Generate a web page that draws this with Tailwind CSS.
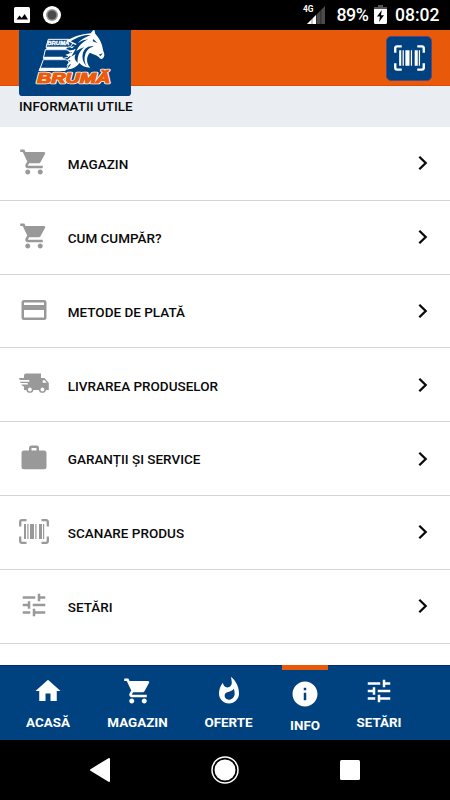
<!DOCTYPE html>
<html lang="ro">
<head>
<meta charset="utf-8">
<title>Informatii utile</title>
<script src="https://cdn.jsdelivr.net/npm/@tailwindcss/browser@4"></script>
</head>
<body class="bg-white">
<svg class="hidden">
  <symbol id="cart" viewBox="0 0 24 24"><path d="M7 18c-1.1 0-1.99.9-1.99 2S5.9 22 7 22s2-.9 2-2-.9-2-2-2zM1 2v2h2l3.6 7.59-1.35 2.45c-.16.28-.25.61-.25.96 0 1.1.9 2 2 2h12v-2H7.42c-.14 0-.25-.11-.25-.25l.03-.12.9-1.63h7.45c.75 0 1.41-.41 1.75-1.03l3.58-6.49A1.003 1.003 0 0020 4H5.21l-.94-2H1zm16 16c-1.1 0-1.99.9-1.99 2s.89 2 1.99 2 2-.9 2-2-.9-2-2-2z"/></symbol>
  <symbol id="card" viewBox="0 0 24 24"><path fill-rule="evenodd" d="M4 4h16a2 2 0 0 1 2 2v12a2 2 0 0 1-2 2H4a2 2 0 0 1-2-2V6a2 2 0 0 1 2-2zM4 6v2h16V6zM4 12v6h16v-6z"/></symbol>
  <symbol id="bag" viewBox="0 0 24 24"><path d="M10 2h4a2 2 0 0 1 2 2v2h4a2 2 0 0 1 2 2v11a2 2 0 0 1-2 2H4a2 2 0 0 1-2-2V8a2 2 0 0 1 2-2h4V4a2 2 0 0 1 2-2m4 4V4h-4v2h4z"/></symbol>
  <symbol id="tune" viewBox="0 0 24 24"><path d="M3 17v2h6v-2H3zM3 5v2h10V5H3zm10 16v-2h8v-2h-8v-2h-2v6h2zM7 9v2H3v2h4v2h2V9H7zm14 4v-2H11v2h10zm-6-4h2V7h4V5h-4V3h-2v6z"/></symbol>
  <symbol id="truck" viewBox="0 0 30 22"><path d="M5 3.200V2.500Q5 .5 7 .5H22V5h3.500L29.800 10v7H27a3.700 3.700 0 0 1-7.200 0H14.500a3.700 3.700 0 0 1-7.200 0H5V13.500L3 12.700 2.400 11.500H9L8.500 10H1.600L1 8.700H10.500L10 7H.7L0 5H5z"/><path d="M23.700 7.200h2l2 2.600h-4z" fill="#fff"/><circle cx="10.900" cy="16.500" r="1.900" fill="#fff"/><circle cx="23.400" cy="16.500" r="1.900" fill="#fff"/></symbol>
  <symbol id="scan" viewBox="0 0 30 25"><path d="M1.200 7.500V3q0-1.800 1.800-1.800h4.500M22.500 1.200H27q1.800 0 1.800 1.800v4.500M28.800 17.500v4.500q0 1.800-1.800 1.800h-4.500M7.500 23.800H3q-1.800 0-1.800-1.800v-4.500" fill="none" stroke="currentColor" stroke-width="2.300"/><path d="M5 5h2v15H5zM8.300 5h1.200v15H8.300zM11 5h4v15h-4zM16.300 5h1.200v15h-1.200zM20 5h3v15h-3zM24 5h1.200v15H24z"/></symbol>
  <symbol id="chev" viewBox="0 0 10 16"><path d="M1.300 1.700L7.700 8l-6.400 6.300" fill="none" stroke="#0a0a0a" stroke-width="2.300"/></symbol>
</svg>
<div class="flex h-[800px] w-[450px] flex-col overflow-hidden bg-white font-['Roboto',sans-serif]">
  <div class="flex h-[30px] shrink-0 items-center bg-black text-white">
    <svg class="ml-[14px] h-4 w-4" viewBox="0 0 16 16"><rect width="16" height="16" rx="1.500" fill="#fff"/><path d="M2.500 12.500l3-4 2.200 2.500 3-4 3.300 5.500z" fill="#000"/></svg>
    <svg class="ml-[13px] h-[18px] w-[18px]" viewBox="0 0 18 18"><circle cx="9" cy="9" r="9" fill="#fff"/><circle cx="9" cy="9" r="6" fill="#999"/><circle cx="9" cy="9" r="4.500" fill="#4a4a4a"/></svg>
    <svg class="ml-[242px] h-6 w-[24px]" viewBox="0 0 24 24"><text x="0" y="9" font-size="9" font-weight="700" fill="#fff" textLength="10.500" lengthAdjust="spacingAndGlyphs">4G</text><path d="M4 21L22 3v18z" fill="#4a4a4a"/><path d="M4 21l9-9v9z" fill="#fff"/><path d="M9 14v7M13.500 9v12M17.800 5v16" stroke="#000" stroke-width=".7" opacity=".6"/></svg>
    <span class="ml-[9.500px] w-[33px] text-[17.8px] font-medium tracking-[-0.5px]">89%</span>
    <svg class="-mt-[2px] ml-[4.500px] h-[19px] w-[13px]" viewBox="0 0 13 19"><path d="M4 0h5v2h4v3H0V2h4z" fill="#555"/><path d="M0 4h13v13.500a1.500 1.500 0 0 1-1.500 1.500h-10A1.500 1.500 0 0 1 0 17.500z" fill="#fff"/><path d="M7.800 5L3 11.500h3L5 17l5-6.800H7z" fill="#000"/></svg>
    <span class="ml-[8px] text-[17.500px] font-medium">08:02</span>
  </div>
  <header class="flex h-[56px] shrink-0 items-start justify-between border-b border-[#dc4c00] bg-[#e85a0a] pr-[18px] pl-[19px]">
    <svg class="relative z-10 h-[66px] w-[112px] shrink-0" viewBox="3 6 336 198">
      <path d="M3 6h336v188q0 10-10 10H13q-10 0-10-10z" fill="#00417f"/>
      <g fill="none" stroke="#fff" stroke-width="3">
        <path d="M91 34h62q14 1 10 14-3 10-15 10H84z"/>
        <path d="M82 65h62q16 1 12 14-4 12-18 12H76z"/>
        <path d="M76 95h66q14 1 10 14l-7 16H65z"/>
      </g>
      <g fill="#fff">
        <path d="M88 56h60l-3 7H84zM79 86h56l-2 7H76zM66 119h80l-4 10H61z"/>
        <path d="M146 38c22-12 40-19 72-22l6-8 5-3 3 13c14 14 21 32 24 51 3 8 5 14 0 20-4 6-10 5-13-1-8-8-17-8-27-14-11 11-13 32 1 45-15 0-25-5-33-14-8 13-22 18-38 20l14-17-15 5 13-17-12 2 13-13c-8 0-12-2-17-5l21-6-16-6 22-3-14-8 22-4z"/>
      </g>
      <g fill="#00417f">
        <path d="M158 40c24-15 42-20 60-19-20 8-31 15-39 25 12-8 22-11 32-12-18 8-31 21-36 36l-14 14 12-21-17 4 20-19z"/>
        <path d="M199 57c-14 12-22 27-20 47-11-8-10-19-6-26l-14 8c10-14 23-23 40-29z"/>
        <path d="M202 62c8-7 17-9 25-6-9 1-15 5-20 12-8 12-11 29-1 47-17-18-15-41-4-53z"/>
        <path d="M226 33l12 12-14-5zM242 80l12-4-6 8z"/>
      </g>
      <text x="88" y="52" font-family="Liberation Sans, sans-serif" font-size="15" font-weight="bold" font-style="italic" fill="#fff" stroke="#fff" textLength="66" lengthAdjust="spacingAndGlyphs">BRUMĂ</text>
      <text x="57" y="165" font-family="Liberation Sans, sans-serif" font-size="42" font-weight="bold" font-style="italic" fill="#fff" stroke="#fff" stroke-width="8" stroke-linejoin="round" textLength="220" lengthAdjust="spacingAndGlyphs">BRUMĂ</text>
      <text x="57" y="165" font-family="Liberation Sans, sans-serif" font-size="42" font-weight="bold" font-style="italic" fill="#ea5b0c" stroke="#ea5b0c" stroke-width="3.500" textLength="220" lengthAdjust="spacingAndGlyphs">BRUMĂ</text>
    </svg>
    <div class="mt-[6px] flex h-[45px] w-[46px] items-center justify-center rounded-[5px] border border-[#5b4677] bg-[#00417f] text-white">
      <svg class="-mt-[2px] h-[26px] w-[31px] fill-current"><use href="#scan"/></svg>
    </div>
  </header>
  <h1 class="flex h-[41px] shrink-0 items-center bg-[#eaeef3] pl-[19px] text-[13.5px] font-medium text-[#0a0a0a]"><span>INFORMATII UTILE</span></h1>
  <main class="h-[538px] shrink-0 text-[13.5px] font-medium text-[#0a0a0a]">
    <div class="flex h-[73.8px] items-center border-b border-[#d4d4d4] pr-[22px] pl-[18.75px]"><svg class="-mt-[2px] h-[30px] w-[30px] fill-[#999]"><use href="#cart"/></svg><span class="mt-[2px] ml-[19px] flex-1">MAGAZIN</span><svg class="h-4 w-[10px]"><use href="#chev"/></svg></div>
    <div class="flex h-[73.8px] items-center border-b border-[#d4d4d4] pr-[22px] pl-[18.75px]"><svg class="-mt-[2px] h-[30px] w-[30px] fill-[#999]"><use href="#cart"/></svg><span class="mt-[2px] ml-[19px] flex-1">CUM CUMPĂR?</span><svg class="h-4 w-[10px]"><use href="#chev"/></svg></div>
    <div class="flex h-[73.8px] items-center border-b border-[#d4d4d4] pr-[22px] pl-[18.75px]"><svg class="-mt-[2px] h-[30px] w-[30px] fill-[#999]"><use href="#card"/></svg><span class="mt-[2px] ml-[19px] flex-1">METODE DE PLATĂ</span><svg class="h-4 w-[10px]"><use href="#chev"/></svg></div>
    <div class="flex h-[73.8px] items-center border-b border-[#d4d4d4] pr-[22px] pl-[18.75px]"><svg class="-mt-[2px] h-[22px] w-[30px] fill-[#999]"><use href="#truck"/></svg><span class="mt-[2px] ml-[19px] flex-1">LIVRAREA PRODUSELOR</span><svg class="h-4 w-[10px]"><use href="#chev"/></svg></div>
    <div class="flex h-[73.8px] items-center border-b border-[#d4d4d4] pr-[22px] pl-[18.75px]"><svg class="-mt-[2px] h-[30px] w-[30px] fill-[#999]"><use href="#bag"/></svg><span class="mt-[2px] ml-[19px] flex-1">GARANȚII ȘI SERVICE</span><svg class="h-4 w-[10px]"><use href="#chev"/></svg></div>
    <div class="flex h-[73.8px] items-center border-b border-[#d4d4d4] pr-[22px] pl-[18.75px]"><svg class="-mt-[2px] h-[25px] w-[30px] fill-[#999] text-[#999]"><use href="#scan"/></svg><span class="mt-px ml-[19px] flex-1">SCANARE PRODUS</span><svg class="h-4 w-[10px]"><use href="#chev"/></svg></div>
    <div class="flex h-[73.8px] items-center border-b border-[#d4d4d4] pr-[22px] pl-[18.75px]"><svg class="-mt-[2px] h-[30px] w-[30px] fill-[#999]"><use href="#tune"/></svg><span class="mt-px ml-[19px] flex-1">SETĂRI</span><svg class="h-4 w-[10px]"><use href="#chev"/></svg></div>
  </main>
  <nav class="flex h-[75px] shrink-0 border-t border-[#002a75] bg-[#00417f] pl-[8px] text-[13.4px] leading-4 font-bold text-white">
    <div class="flex w-20 flex-col items-center pt-[10px]"><svg class="h-[30px] w-[30px] fill-white" viewBox="0 0 24 24"><path d="M10 20v-6h4v6h5v-8h3L12 3 2 12h3v8z"/></svg><span class="mt-[9px]">ACASĂ</span></div>
    <div class="flex w-[99px] flex-col items-center pt-[10px]"><svg class="h-[30px] w-[30px] fill-white"><use href="#cart"/></svg><span class="mt-[9px]">MAGAZIN</span></div>
    <div class="flex w-[83px] flex-col items-center pt-[10px]"><svg class="h-[30px] w-[30px] fill-white" viewBox="0 0 24 24"><path d="M13.500.67s.74 2.650.74 4.800c0 2.060-1.350 3.730-3.410 3.730-2.070 0-3.630-1.670-3.630-3.730l.03-.36C5.210 7.510 4 10.620 4 14c0 4.420 3.580 8 8 8s8-3.580 8-8C20 8.610 17.410 3.800 13.500.67zM11.710 19c-1.780 0-3.220-1.400-3.220-3.140 0-1.620 1.050-2.760 2.810-3.120 1.770-.36 3.600-1.210 4.620-2.580.39 1.290.59 2.650.59 4.040 0 2.650-2.150 4.800-4.800 4.800z"/></svg><span class="mt-[9px]">OFERTE</span></div>
    <div class="-mt-px ml-[12px] flex w-[46px] flex-col items-center border-t-[5px] border-[#e85a0a] pt-[9px]"><svg class="h-[30px] w-[30px] fill-white" viewBox="0 0 24 24"><path d="M12 2C6.480 2 2 6.480 2 12s4.480 10 10 10 10-4.480 10-10S17.520 2 12 2zm1 15h-2v-6h2v6zm0-8h-2V7h2v2z"/></svg><span class="mt-[9px]">INFO</span></div>
    <div class="ml-[12px] flex w-[78px] flex-col items-center pt-[10px]"><svg class="h-[30px] w-[30px] fill-white"><use href="#tune"/></svg><span class="mt-[9px]">SETĂRI</span></div>
  </nav>
  <div class="flex h-[60px] shrink-0 items-center bg-black">
    <svg class="ml-[90px] h-[24px] w-[20px]" viewBox="0 0 20 24"><path d="M19 1v22L1 12z" fill="#fff" stroke="#fff" stroke-width="2" stroke-linejoin="round"/></svg>
    <svg class="ml-[101px] h-7 w-7" viewBox="0 0 28 28"><circle cx="14" cy="14" r="13" fill="none" stroke="#fff" stroke-width="1.500"/><circle cx="14" cy="14" r="10.500" fill="#fff"/></svg>
    <div class="ml-[101px] h-5 w-5 rounded-[1.500px] bg-white"></div>
  </div>
</div>
</body>
</html>
